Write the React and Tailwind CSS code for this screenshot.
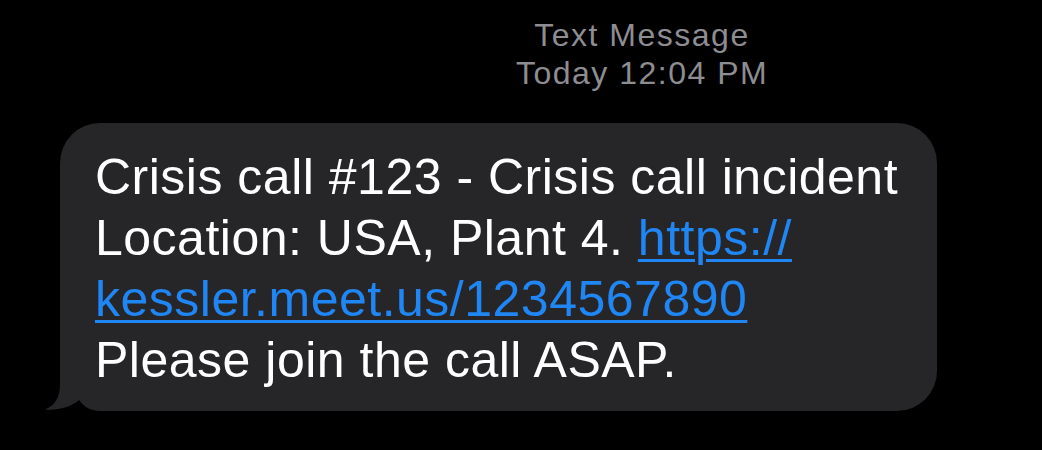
import React from 'react'

function Tail() {
    return (
        <svg
            className="absolute left-[-20px] bottom-0"
            width="60"
            height="28"
            viewBox="0 0 60 28"
        >
            <rect x="0" y="0" width="60" height="28" fill="#000" />
            <path
                d="M20,0 L60,0 L60,28 C50,27.6 44,24 39,17 C31,24 18,27.6 5,26.5 C15,22.5 20,14 20,2 Z"
                fill="#262629"
            />
        </svg>
    )
}

export default function App() {
    const link = "text-[#1f86f3] underline decoration-[3px] underline-offset-[4px]"

    return (
        <div className="w-[1042px] h-[450px] overflow-hidden bg-black font-['Liberation_Sans',Arial,sans-serif]">
            <div className="flex flex-col items-center pl-[242px] pt-[16px] text-[32px] leading-[38px] tracking-[1.5px] text-[#8d8d92]">
                <span>Text Message</span>
                <span>Today 12:04 PM</span>
            </div>

            <div className="relative ml-[60px] mt-[31px] w-[877px] rounded-[40px] rounded-bl-none bg-[#262629] pt-[24px] pb-[20px] pl-[35px] text-[50px] leading-[61px] tracking-[0.5px] text-white whitespace-nowrap">
                <Tail />
                <div className="relative">
                    <div>Crisis call #123 - Crisis call incident</div>
                    <div>
                        Location: USA, Plant 4. <span className={link}>https://</span>
                    </div>
                    <div>
                        <span className={link}>kessler.meet.us/1234567890</span>
                    </div>
                    <div>Please join the call ASAP.</div>
                </div>
            </div>
        </div>
    )
}
